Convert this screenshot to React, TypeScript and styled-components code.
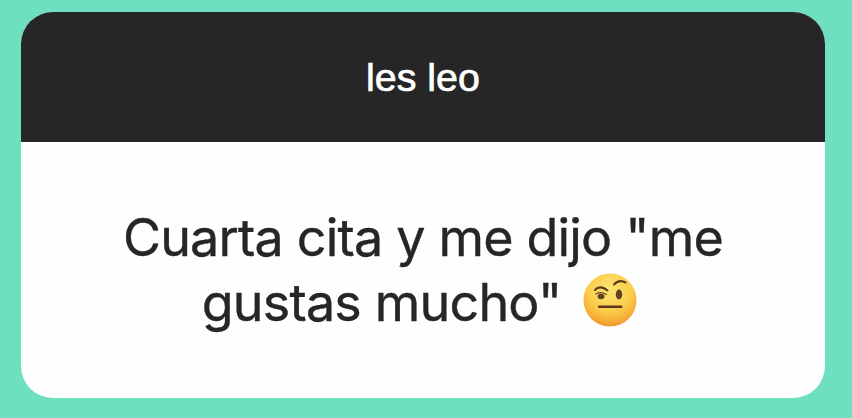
import styled, { createGlobalStyle } from "styled-components"

const GlobalStyle = createGlobalStyle`
  html, body {
    margin: 0;
    padding: 0;
    background: #6ee0c0;
  }
`

const Page = styled.div`
  width: 852px;
  height: 418px;
  box-sizing: border-box;
  padding: 12px 27px 20px 21px;
  background: #6ee0c0;
  overflow: hidden;
`

const Card = styled.div`
  height: 386px;
  display: flex;
  flex-direction: column;
  border-radius: 32px;
  overflow: hidden;
  background: #fefefe;
`

const Header = styled.div`
  height: 130px;
  flex: none;
  display: flex;
  align-items: center;
  justify-content: center;
  box-sizing: border-box;
  background: #262626;
  color: #fff;
  font-family: "Liberation Sans", Arial, sans-serif;
  font-size: 39.4px;
  font-weight: 400;
  -webkit-text-stroke: 0.7px #fff;
`

const Body = styled.div`
  flex: 1;
  display: flex;
  align-items: center;
  justify-content: center;
  padding: 0 60px;
`

const Question = styled.p`
  margin: 0;
  text-align: center;
  color: #262626;
  font-family: Inter, "Liberation Sans", sans-serif;
  font-size: 52px;
  line-height: 65px;
  letter-spacing: -0.8px;
  font-weight: 400;
  -webkit-text-stroke: 0.4px #262626;
`

const Emoji = styled.svg`
  width: 54px;
  height: 54px;
  vertical-align: -6px;
  margin: 0 7px 0 8px;
`

function RaisedBrowEmoji() {
  return (
    <Emoji viewBox="0 0 54 54">
      <defs>
        <radialGradient id="face" cx="50%" cy="30%" r="72%">
          <stop offset="0%" stopColor="#fde272" />
          <stop offset="55%" stopColor="#fbcf4c" />
          <stop offset="85%" stopColor="#f5ac36" />
          <stop offset="100%" stopColor="#ea8f2a" />
        </radialGradient>
      </defs>
      <circle cx="27" cy="27" r="26.5" fill="url(#face)" />
      <path d="M12 17 Q17 11.5 24.5 17.5" fill="none" stroke="#5a3a1a" strokeWidth="2" strokeLinecap="round" />
      <path d="M31 11.5 Q36 6 42.5 9.5" fill="none" stroke="#5a3a1a" strokeWidth="2" strokeLinecap="round" />
      <path d="M13 21 Q18 18 23.5 21.5" fill="none" stroke="#6b4a20" strokeWidth="1.2" strokeLinecap="round" />
      <ellipse cx="18" cy="23.5" rx="3.4" ry="2.8" fill="#5a3f20" />
      <ellipse cx="36" cy="21.5" rx="3.2" ry="5" fill="#5f4422" />
      <rect x="15" y="32.5" width="24.5" height="2.4" rx="1" fill="#5a3a1a" />
    </Emoji>
  )
}

function App() {
  return (
    <Page>
      <GlobalStyle />
      <Card>
        <Header>les leo</Header>
        <Body>
          <Question>
            Cuarta cita y me dijo "me
            <br />
            gustas mucho"{" "}
            <RaisedBrowEmoji />
          </Question>
        </Body>
      </Card>
    </Page>
  )
}

export default App
